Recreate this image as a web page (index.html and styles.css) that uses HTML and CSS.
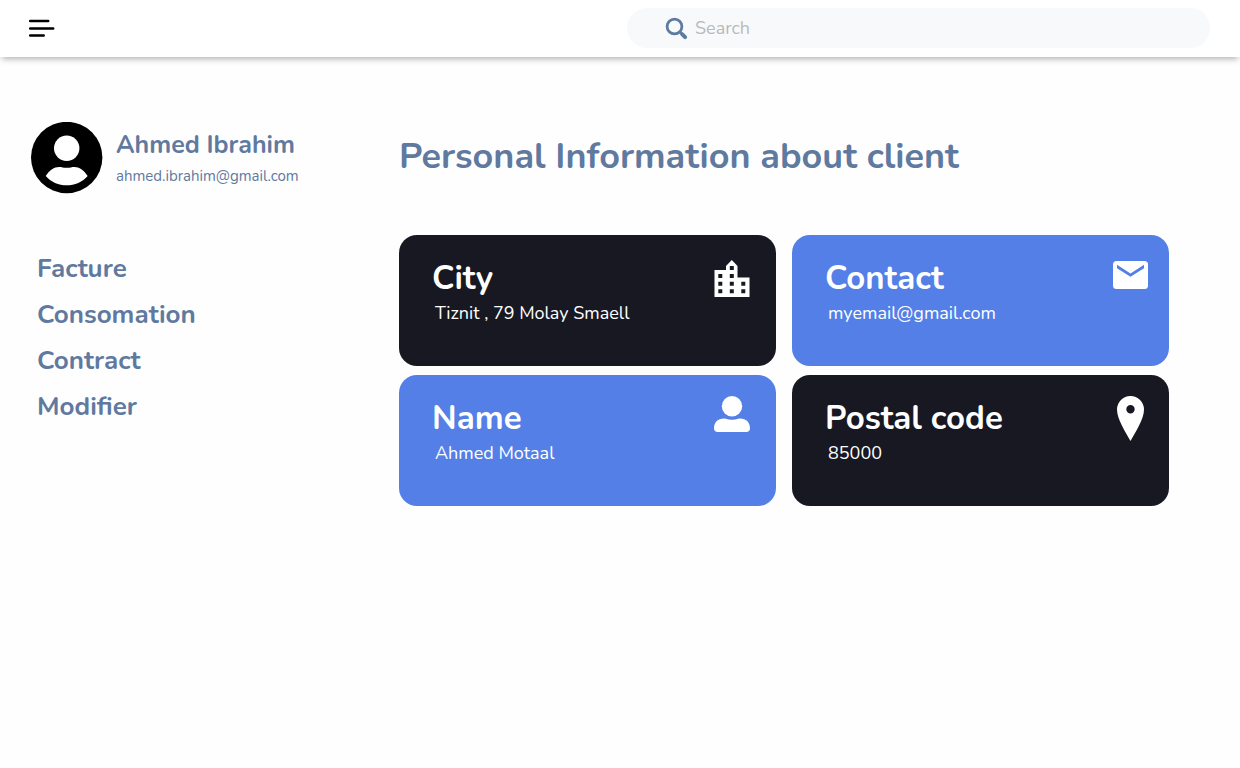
FILE: index.html
```html
<!DOCTYPE html>
<html lang="en">
<head>
<meta charset="utf-8">
<meta name="viewport" content="width=device-width, initial-scale=1">
<title>Client information</title>
<link rel="stylesheet" href="styles.css">
</head>
<body>
<header class="topbar">
  <button class="menu-button" type="button" aria-label="Menu">
    <svg width="28" height="20" viewBox="0 0 28 20" fill="none" stroke="#000" stroke-width="2.5" stroke-linecap="round"><path d="M2.2 3h18M2.2 10.4h23M2.2 17.5h13.5"/></svg>
  </button>
  <label class="search">
    <svg width="24" height="24" viewBox="0 0 24 24" fill="none" stroke="#5f7aa2" stroke-linecap="round"><circle cx="9.5" cy="10.500" r="7.400" stroke-width="2.800"/><path d="M15.3 16.3l1.700 1.700" stroke-width="2.800"/><path d="M17.300 18.300l2.800 2.800" stroke-width="4"/></svg>
    <input class="search-input" type="search" placeholder="Search" aria-label="Search">
  </label>
</header>
<div class="layout">
  <aside class="sidebar">
    <div class="profile">
      <svg class="avatar" width="72" height="72" viewBox="0 0 72 72"><circle cx="35.700" cy="35.500" r="35.700"/><circle cx="35.700" cy="26.300" r="12.700" fill="#fff"/><path d="M14.700 54C18.700 48 23.200 45 28 45C31 45 32 45.800 35.700 45.800C39.400 45.800 40.500 45 43.500 45C48.200 45 52.700 48 56.700 54C51.700 60 43.700 63.300 35.700 63.300C27.700 63.300 19.700 60 14.700 54Z" fill="#fff"/></svg>
      <div>
        <p class="profile-name">Ahmed Ibrahim</p>
        <p class="profile-email">ahmed.ibrahim@gmail.com</p>
      </div>
    </div>
    <nav class="nav">
      <a class="nav-link" href="#">Facture</a>
      <a class="nav-link" href="#">Consomation</a>
      <a class="nav-link" href="#">Contract</a>
      <a class="nav-link" href="#">Modifier</a>
    </nav>
  </aside>
  <main class="content">
    <h1 class="title">Personal Information about client</h1>
    <div class="cards">
      <section class="card dark">
        <div><h2 class="card-title">City</h2><p class="card-text">Tiznit , 79 Molay Smaell</p></div>
        <svg class="card-icon" width="36" height="48" viewBox="0 -4 36 48"><path fill="#fff" fill-rule="evenodd" d="M.500 10H12V6L17.800 0L23.500 6V17.500H35.500V37H.500ZM4.300 14h4v4h-4zM4.300 21.700h4v4h-4zM4.300 29.300h4v4h-4zM15.800 6h4v4h-4zM15.800 14h4v4h-4zM15.800 21.700h4v4h-4zM15.800 29.300h4v4h-4zM27.300 21.700h4v4h-4zM27.300 29.300h4v4h-4z"/></svg>
      </section>
      <section class="card blue">
        <div><h2 class="card-title">Contact</h2><p class="card-text">myemail@gmail.com</p></div>
        <svg class="card-icon" width="36" height="48" viewBox="0 -4 36 48"><rect y="1" width="35" height="28" rx="3.500" fill="#fff"/><path d="M4 4.800V8.200L17.500 16.800L31 8.200V4.800L17.500 13.500Z" fill="#537fe7"/></svg>
      </section>
      <section class="card blue">
        <div><h2 class="card-title">Name</h2><p class="card-text">Ahmed Motaal</p></div>
        <svg class="card-icon" width="36" height="48" viewBox="0 0 36 48" fill="#fff"><circle cx="18" cy="10.300" r="10.200"/><path d="M0 32.500C0 26 4 22.500 10 22.500C13 22.500 14 23.800 18 23.800C22 23.800 23 22.500 26 22.500C32 22.500 36 26 36 32.500C36 34.700 34.500 36 32.500 36H3.500C1.500 36 0 34.700 0 32.500Z"/></svg>
      </section>
      <section class="card dark">
        <div><h2 class="card-title">Postal code</h2><p class="card-text">85000</p></div>
        <svg class="card-icon" width="36" height="48" viewBox="0 0 36 48"><path fill="#fff" fill-rule="evenodd" d="M17.500 0A13.500 13.500 0 0 0 4 13.500C4 23 12 35 17.500 45C23 35 31 23 31 13.500A13.500 13.500 0 0 0 17.500 0ZM17.500 9a4.200 4.200 0 1 1 0 8.400a4.200 4.200 0 0 1 0-8.400z"/></svg>
      </section>
    </div>
  </main>
</div>
</body>
</html>
```
FILE: styles.css
```css
* { box-sizing: border-box; }
body, h1, h2, p { margin: 0; }
body {
  background: #fefefe;
  color: #60799f;
  font-family: Nunito, Lato, sans-serif;
}
.topbar {
  display: flex;
  align-items: center;
  justify-content: space-between;
  padding: 8px 30px 9px 28px;
  background: #fff;
  box-shadow: 0 4px 6px -2px rgba(0, 0, 0, .3);
}
.menu-button {
  display: flex;
  padding: 0;
  border: 0;
  background: none;
}
.search {
  display: flex;
  align-items: center;
  gap: 6px;
  width: calc(50% - 8px);
  height: 40px;
  padding: 0 38px;
  border-radius: 20px;
  background: #f7f9fb;
}
.search-input {
  flex: 1;
  min-width: 0;
  padding: 0;
  border: 0;
  outline: 0;
  background: none;
  font: 18px/24px Nunito, Lato, sans-serif;
}
.search-input::placeholder { color: #b9babc; }
.layout {
  display: grid;
  grid-template-columns: 368px 1fr;
  padding: 65px 71px 40px 31px;
}
.profile {
  display: flex;
  align-items: center;
  gap: 13px;
}
.avatar { flex: none; }
.profile-name {
  font-size: 25px;
  line-height: 36px;
  font-weight: 700;
}
.profile-email {
  font-size: 15px;
  line-height: 26px;
}
.nav {
  display: flex;
  flex-direction: column;
  align-items: flex-start;
  padding: 52px 6px;
}
.nav-link {
  color: inherit;
  font-size: 26px;
  line-height: 46px;
  font-weight: 700;
  text-decoration: none;
}
.title {
  padding-top: 11px;
  font-size: 36px;
  line-height: 48px;
  font-weight: 700;
}
.cards {
  display: grid;
  grid-template-columns: 1fr 1fr;
  gap: 9px 16px;
  margin-top: 54px;
}
.card {
  display: flex;
  justify-content: space-between;
  min-height: 131px;
  padding: 21px 26px 20px 33px;
  border-radius: 18px;
  color: #fff;
}
.card:nth-child(even) { padding-right: 20px; }
.dark { background: #181823; }
.blue { background: #537fe7; }
.card-icon { flex: none; }
.card-title {
  font-size: 33px;
  line-height: 45px;
  font-weight: 700;
}
.card-text {
  padding-left: 3px;
  font-size: 18px;
  line-height: 25px;
}
```
